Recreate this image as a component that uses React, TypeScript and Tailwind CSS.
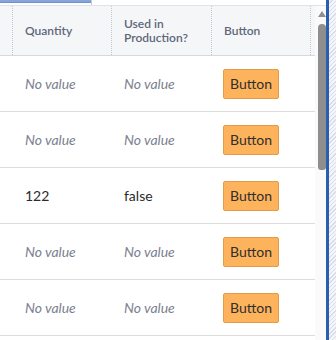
const rows: { qty: string | null; used: string | null }[] = [
  { qty: null, used: null },
  { qty: null, used: null },
  { qty: '122', used: 'false' },
  { qty: null, used: null },
  { qty: null, used: null },
];

function Cell({ value }: { value: string | null }) {
  if (value === null) {
    return <span className="italic text-[#7b8190]">No value</span>;
  }
  return <span className="text-[#2b2b2b]">{value}</span>;
}

export default function App() {
  return (
    <div
      className="w-[336px] h-[340px] overflow-hidden bg-white flex text-[14px]"
      style={{ fontFamily: 'Lato, "Noto Sans", sans-serif' }}
    >
      <div className="w-[326px] flex flex-col">
        {/* top strip with the focused input edge */}
        <div className="h-[6px] flex border-b border-[#dfe2e7]">
          <div className="w-[92px] border-r border-[#c9ccd2]">
            <div className="h-[3px] bg-[#86a5da] border-b border-[#6d8fcf]" />
          </div>
        </div>

        <div className="flex flex-1">
          <div className="w-[315px]">
            {/* header */}
            <div className="h-[50px] bg-[#f5f6f8] border-b border-[#d6d9de] flex text-[12px] font-semibold text-[#5d6778] leading-[14px]">
              <div className="w-[12px]" />
              <div className="w-[99px] border-l border-dotted border-[#c4c8ce] flex items-center pl-[12px]">
                Quantity
              </div>
              <div className="w-[100px] border-l border-dotted border-[#c4c8ce] flex items-center pl-[12px]">
                Used in
                <br />
                Production?
              </div>
              <div className="w-[99px] border-l border-dotted border-[#c4c8ce] flex items-center pl-[12px]">
                Button
              </div>
              <div className="flex-1 border-l border-dotted border-[#c4c8ce]" />
            </div>

            {rows.map((r, i) => (
              <div key={i} className="h-[56px] border-b border-[#dcdcdc] flex items-center">
                <div className="w-[12px]" />
                <div className="w-[99px] pl-[13px]">
                  <Cell value={r.qty} />
                </div>
                <div className="w-[100px] pl-[13px]">
                  <Cell value={r.used} />
                </div>
                <div className="w-[99px] pl-[12px]">
                  <button className="h-[30px] w-[56px] bg-[#fdb25c] border border-[#e39c4b] rounded-[2px] text-[#2f2f2f] text-[14px] leading-none">
                    Button
                  </button>
                </div>
              </div>
            ))}
          </div>

          {/* scrollbar */}
          <div className="w-[11px] bg-[#fafafa] flex flex-col items-end pr-[0px]">
            <svg width="8" height="7" viewBox="0 0 8 7" className="mt-[5px] mr-[0px]">
              <polygon points="4,0 8,6 0,6" fill="#8f8f8f" />
            </svg>
            <div className="mt-[6px] w-[8px] h-[146px] bg-[#8e8e8e] rounded-t-[4px] rounded-b-[3px]" />
          </div>
        </div>
      </div>

      <div className="w-[3px] bg-[#2b5db2]" />
      <div className="w-[7px] bg-[repeating-linear-gradient(135deg,#f4f5f8_0px,#f4f5f8_2px,#d9dde5_2px,#d9dde5_3px)]" />
    </div>
  );
}
